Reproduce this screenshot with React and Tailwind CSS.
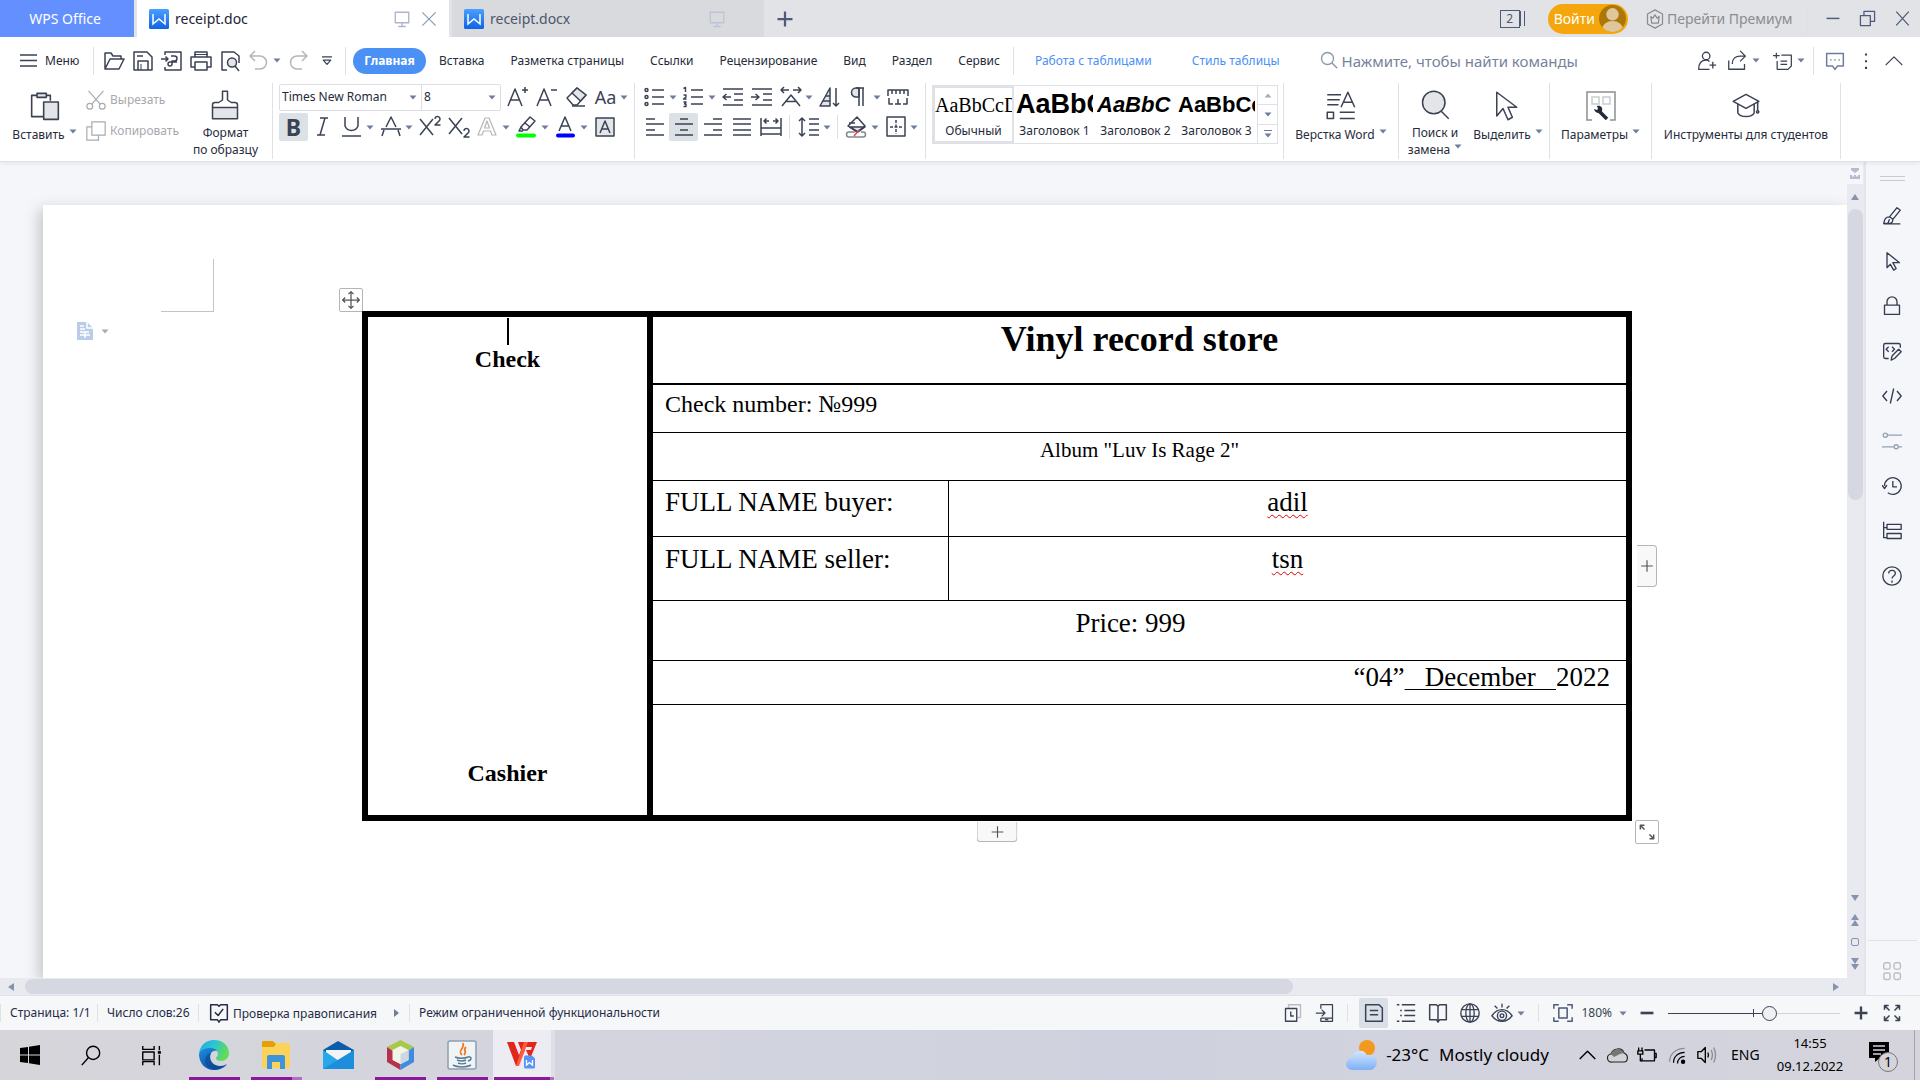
import React from "react";

const ui = "font-['Noto_Sans','Open_Sans',sans-serif]";
const serif = "font-['Liberation_Serif','Times_New_Roman',serif]";

function Svg({ size = 24, w = 1.5, className = "", children }) {
  return (
    <svg
      width={size}
      height={size}
      viewBox="0 0 24 24"
      fill="none"
      stroke="currentColor"
      strokeWidth={w}
      strokeLinejoin="round"
      className={"shrink-0 " + className}
      aria-hidden="true"
    >
      {children}
    </svg>
  );
}

const Caret = ({ className = "text-[#6f7d9c]" }) => (
  <svg width="8" height="5" viewBox="0 0 8 5" className={"shrink-0 " + className} aria-hidden="true">
    <path d="M0.5 0.5h7L4 4.5z" fill="currentColor" />
  </svg>
);

const Sep = ({ className = "h-9" }) => <div className={"w-px shrink-0 bg-[#dfe1e5] " + className} />;

/* ---------- icons ---------- */

const icons = {
  open: (
    <Svg>
      <path d="M3 20V4h6l2 3h8v3M3 20h14l5-10H8L3 20z" />
    </Svg>
  ),
  save: (
    <Svg>
      <path d="M3 3h13l5 5v13H3z M7 21v-9h10v9" />
      <path d="M6 7h6" />
      <path d="M10 15v6" strokeWidth="1" />
    </Svg>
  ),
  pdf: (
    <Svg>
      <path d="M5 6V3h16v18H5v-3" />
      <path d="M1 10h7M5.500 7.500 8 10l-2.500 2.500" />
      <path d="M11 7h3.500a2.500 2.500 0 0 1 0 5H12v3a2 2 0 1 1-2-2h7" />
    </Svg>
  ),
  print: (
    <Svg>
      <path d="M6 8V3h12v5M6 18H2V8h20v10h-4" />
      <path d="M6 13h12v8H6z" />
      <path d="M5 5.500h14" strokeWidth="1" />
    </Svg>
  ),
  preview: (
    <Svg>
      <path d="M9 21H4V3h12l5 4v7" />
      <circle cx="14" cy="13.500" r="4.500" fill="#e3e5e8" />
      <path d="m17 17 4 5" />
    </Svg>
  ),
  undo: (
    <Svg>
      <path d="M8 2 3 7l5 5M3 7h10a6.500 6.500 0 0 1 0 13H8" />
    </Svg>
  ),
  redo: (
    <Svg>
      <path d="m16 2 5 5-5 5M21 7H11a6.500 6.500 0 0 0 0 13h5" />
    </Svg>
  ),
  more: (
    <Svg size={20}>
      <path d="M6 7h12M7.500 11h9L12 16z" />
    </Svg>
  ),
  growFont: (
    <Svg>
      <path d="M1 21 8 4l7 17M3.500 15h9M15 5h6M18 2v6" />
    </Svg>
  ),
  shrinkFont: (
    <Svg>
      <path d="M1 21 8 4l7 17M3.500 15h9M15 5h6" />
    </Svg>
  ),
  eraser: (
    <Svg>
      <path d="M12 3 2 13l6 7h4l9-10z" />
      <path d="m7 8 8.500 8L21 10l-9-7z" fill="#e3e5e8" />
      <path d="M7 21h13" />
    </Svg>
  ),
  italic: (
    <Svg>
      <path d="M9 3h8M6 20h8M14 3 9 20" />
    </Svg>
  ),
  underline: (
    <Svg>
      <path d="M5 2v9a7 7 0 0 0 13 0V2M2 21h19" />
    </Svg>
  ),
  strike: (
    <Svg>
      <path d="M7 12 12 2l5 10M5 15l-2 6M19 15l2 6M2 14h20" />
    </Svg>
  ),
  superscript: (
    <Svg>
      <path d="m2 4 13 16M15 4 2 20" />
      <path d="M17 4a2.500 2.500 0 1 1 4.500 1.500L17 10h5.500" />
    </Svg>
  ),
  subscript: (
    <Svg>
      <path d="m2 3 13 16M15 3 2 19" />
      <path d="M17 16a2.500 2.500 0 1 1 4.500 1.500L17 22h5.500" />
    </Svg>
  ),
  textEffect: (
    <Svg w={1.2}>
      <path d="m2 20 7-17h4l7 17h-4l-1.500-4h-7L6 20zM8.500 13h5L11 6z" />
    </Svg>
  ),
  highlight: (
    <Svg>
      <path d="m6 12 9-10 5 4-8 9H8z" />
      <path d="m6 12-2 4h4M10 8l5 4" />
      <path d="M3 20.500h16" stroke="#00ff00" strokeWidth="4" strokeLinecap="round" />
    </Svg>
  ),
  fontColor: (
    <Svg>
      <path d="m5 16 6-14 6 14M7 11h8" />
      <path d="M4 20.500h15" stroke="#0000ff" strokeWidth="4" strokeLinecap="round" />
    </Svg>
  ),
  charShade: (
    <Svg>
      <path d="M3 3h18v18H3z" fill="#e3e5e8" />
      <path d="m7 18 5-12 5 12M9 14h6" />
    </Svg>
  ),
  bullets: (
    <Svg>
      <circle cx="3.500" cy="5" r="1.500" />
      <circle cx="3.500" cy="12" r="1.500" />
      <circle cx="3.500" cy="19" r="1.500" />
      <path d="M9 5h12M9 12h12M9 19h12" />
    </Svg>
  ),
  numbers: (
    <Svg>
      <path d="M9 5h12M9 12h12M9 19h12" />
      <path d="M1.500 3.500 3.500 2.500V7M1.500 10H4v2L1.500 14H4.500M1.500 17H4l-1.500 2H4v2.500H1.500" strokeWidth="1.400" />
    </Svg>
  ),
  outdent: (
    <Svg>
      <path d="M2 4h20M13 9h9M13 15h9M2 20h20M2 12h8M5.500 9 2 12l3.500 3" />
    </Svg>
  ),
  indent: (
    <Svg>
      <path d="M2 4h20M13 9h9M13 15h9M2 20h20M1 12h8M5.500 9 9 12l-3.500 3" />
    </Svg>
  ),
  charScale: (
    <Svg>
      <path d="m3 21 9-11 9 11M7.500 16.500h9" />
      <path d="M2 5h8M5 2 2 5l3 3M14 5h8M19 2l3 3-3 3" />
    </Svg>
  ),
  sort: (
    <Svg>
      <path d="M2 21 12 3v18z" fill="#e3e5e8" />
      <path d="M7.500 11H12M5 16h7" />
      <path d="M18 3v18M15 18l3 3 3-3" />
    </Svg>
  ),
  pilcrow: (
    <Svg>
      <path d="M12 12H9a4.500 4.500 0 0 1 0-9h3z" fill="#e3e5e8" />
      <path d="M12 21V3M16 21V3M9 3h8" />
    </Svg>
  ),
  ruler: (
    <Svg>
      <path d="M2 11V5h20v6M6 5v4M10 5v4M14 5v4M18 5v4" />
      <path d="M3 13v6h4M9 19h6M12 14v5M21 13v6h-4" />
    </Svg>
  ),
  left: (
    <Svg>
      <path d="M3 4h9M3 9h18M3 15h9M3 20h18" />
    </Svg>
  ),
  center: (
    <Svg>
      <path d="M8 4h8M3 9h18M8 15h8M3 20h18" />
    </Svg>
  ),
  right: (
    <Svg>
      <path d="M12 4h9M3 9h18M12 15h9M3 20h18" />
    </Svg>
  ),
  justify: (
    <Svg>
      <path d="M3 4h18M3 9h18M3 15h18M3 20h18" />
    </Svg>
  ),
  distribute: (
    <Svg>
      <path d="M2 3v18M22 3v18M5 6h5M14 6h5M7.500 3.500 5 6l2.500 2.500M16.500 3.500 19 6l-2.500 2.500M2 13h20M2 19h20" />
    </Svg>
  ),
  lineSpacing: (
    <Svg>
      <path d="M5 3v18M2 6l3-3 3 3M2 18l3 3 3-3M12 4h10M12 9h10M12 15h10M12 20h10" />
    </Svg>
  ),
  shading: (
    <Svg>
      <path d="M5 12h15l-7 5z" fill="#e3e5e8" />
      <path d="m12 2 8 9-8 6-9-6zM4 8h6" />
      <path d="M10 17H4a2.500 2.500 0 0 0 0 5h14a2.500 2.500 0 0 0 0-5h-2" stroke="#85888f" />
      <path d="m9 21 5-6" stroke="#e5484d" />
    </Svg>
  ),
  borders: (
    <Svg>
      <path d="M3 2h18v19H3z" />
      <path d="M12 5v14M6 12h12" strokeDasharray="3 1.500" />
    </Svg>
  ),
};

/* ---------- ribbon pieces ---------- */

function Tool({ name, caret, active, muted, label, children }) {
  return (
    <button
      type="button"
      aria-label={label || name}
      className={"flex h-7 shrink-0 items-center " + (muted ? "text-[#b4b6ba]" : "text-[#3a4254]")}
    >
      <span
        className={
          "flex h-7 w-[29px] items-center justify-center rounded-xs " + (active ? "bg-[#dce1e6]" : "")
        }
      >
        {children || icons[name]}
      </span>
      {caret && (
        <span className="w-[10px]">
          <Caret />
        </span>
      )}
    </button>
  );
}

function BigTool({ icon, lines, caret, className = "" }) {
  return (
    <button type="button" className={"flex flex-col items-center pt-[2px] text-[#262b3a] " + className}>
      <span className={"flex items-center " + (lines.length > 1 ? "h-[39px]" : "h-[41px]")}>{icon}</span>
      {lines.map((line, i) => (
        <span key={line} className="flex gap-1 text-xs leading-[17px] whitespace-nowrap">
          {line}
          {caret && i === lines.length - 1 && (
            <span className="pt-[3px]">
              <Caret />
            </span>
          )}
        </span>
      ))}
    </button>
  );
}

function StyleCell({ sample, label, sampleClass, active }) {
  return (
    <button
      type="button"
      className={
        "flex w-[81px] flex-col border-2 text-center " + (active ? "border-[#dfe1e6]" : "border-transparent")
      }
    >
      <span className={"flex h-[33px] w-full items-center overflow-hidden whitespace-nowrap text-black " + sampleClass}>
        {sample}
      </span>
      <span className="w-full text-xs leading-[20px] whitespace-nowrap text-[#262b3a]">{label}</span>
    </button>
  );
}

function DocIcon() {
  return (
    <svg width="20" height="20" viewBox="0 0 20 20" className="shrink-0" aria-hidden="true">
      <defs>
        <linearGradient id="doc" x1="0" y1="0" x2="0" y2="1">
          <stop offset="0" stopColor="#4aa0ff" />
          <stop offset="1" stopColor="#1062e6" />
        </linearGradient>
      </defs>
      <rect width="20" height="20" rx="1.500" fill="url(#doc)" />
      <path d="M4 5v10l6-5 6 5V5" fill="none" stroke="#fff" strokeWidth="1.500" />
    </svg>
  );
}

const Monitor = ({ className }) => (
  <Svg size={18} className={className} w={1.8}>
    <path d="M3 3h18v14H3zM12 17v5M7 22h10" />
  </Svg>
);

function TitleBar() {
  return (
    <header className="flex h-[37px] items-stretch bg-[#e2e3e7]">
      <button type="button" className="w-[134px] bg-[#638fff] pr-1 text-sm text-white">
        WPS Office
      </button>
      <div className="ml-[3px] flex w-[312px] items-center bg-white pl-3 text-sm text-[#1d2433]">
        <DocIcon />
        <span className="ml-1.5 flex-1">receipt.doc</span>
        <Monitor className="text-[#adb6cb]" />
        <button type="button" aria-label="Закрыть" className="mr-3 ml-[10px] text-[#8d99b5]">
          <Svg size={16} w={1.8}>
            <path d="m2 2 20 20M22 2 2 22" />
          </Svg>
        </button>
      </div>
      <div className="ml-[3px] flex w-[312px] items-center bg-[#d9dade] pl-3 text-sm text-[#4c566c]">
        <DocIcon />
        <span className="ml-1.5 flex-1">receipt.docx</span>
        <Monitor className="mr-[38px] text-[#bcc4d4]" />
      </div>
      <button type="button" aria-label="Новая вкладка" className="ml-3 text-[#4d5a78]">
        <Svg size={18} w={3}>
          <path d="M12 2v20M2 12h20" />
        </Svg>
      </button>
      <div className="ml-auto flex items-center">
        <button type="button" className="mr-3 flex items-center text-[#4d5a78]">
          <span className="flex h-[18px] w-5 items-center justify-center border border-current text-xs">2</span>
          <span className="h-[15px] w-[5px] border-r border-l border-current" />
        </button>
        <Sep className="h-6 bg-[#cdced3]" />
        <button
          type="button"
          className="mx-[10px] flex h-[30px] items-center rounded-full bg-[#f5a60c] pr-0.5 pl-1.5 text-sm text-white"
        >
          Войти
          <svg width="27" height="27" viewBox="0 0 26 26" className="ml-1" aria-hidden="true">
            <clipPath id="avatar">
              <circle cx="13" cy="13" r="13" />
            </clipPath>
            <g clipPath="url(#avatar)">
              <rect width="26" height="26" fill="#ad7708" />
              <circle cx="13" cy="9" r="6" fill="#e0c79b" />
              <ellipse cx="13" cy="23" rx="10" ry="7.500" fill="#e0c79b" />
            </g>
          </svg>
        </button>
        <Sep className="h-6 bg-[#cdced3]" />
        <button
          type="button"
          className="ml-1.5 flex w-[158px] items-center gap-0.5 text-sm whitespace-nowrap text-[#8b8c90]"
        >
          <Svg size={20}>
            <path d="m12 1 9 5v12l-9 5-9-5V6z" />
            <path d="M7 9l2.500 2L12 7l2.500 4L17 9l-1 8H8z" />
          </Svg>
          Перейти Премиум
        </button>
        <Sep className="ml-1 h-7 bg-[#cdced3]" />
        <div className="flex w-[112px] items-center justify-between pr-[10px] pl-[18px] text-[#4d5a78]">
          <button type="button" aria-label="Свернуть">
            <Svg size={14} w={2.5}>
              <path d="M1 11h22" />
            </Svg>
          </button>
          <button type="button" aria-label="Развернуть">
            <Svg size={17} w={1.8}>
              <path d="M2 8h14v14H2zM7 8V2h15v14h-6" />
            </Svg>
          </button>
          <button type="button" aria-label="Выход">
            <Svg size={15} w={2}>
              <path d="m2 1 20 22M22 1 2 23" />
            </Svg>
          </button>
        </div>
      </div>
    </header>
  );
}

const tabs = ["Вставка", "Разметка страницы", "Ссылки", "Рецензирование", "Вид", "Раздел", "Сервис"];

function MenuBar() {
  return (
    <nav className="flex h-[46px] items-center bg-white pt-px text-xs text-[#262b3a]">
      <button type="button" className="flex w-[93px] items-center gap-2 pl-5">
        <svg width="17" height="14" viewBox="0 0 17 14" className="text-[#3a4254]" aria-hidden="true">
          <path d="M0 1h17M0 6.500h17M0 12h17" stroke="currentColor" strokeWidth="1.300" />
        </svg>
        Меню
      </button>
      <Sep className="mr-[5px] h-7" />
      {["open", "save", "pdf", "print", "preview"].map((n) => (
        <Tool key={n} name={n} />
      ))}
      <Tool name="undo" muted caret />
      <Tool name="redo" muted />
      <Tool name="more" />
      <Sep className="mr-[7px] ml-1 h-7" />
      <button
        type="button"
        className="h-[26px] w-[73px] shrink-0 rounded-full bg-[#4a90f5] text-xs font-bold text-white"
      >
        Главная
      </button>
      {tabs.map((t) => (
        <button type="button" key={t} className="h-7 shrink-0 px-[13px] whitespace-nowrap">
          {t}
        </button>
      ))}
      <Sep className="h-7" />
      <button type="button" className="shrink-0 pl-[21px] whitespace-nowrap text-[#4a90f5]">
        Работа с таблицами
      </button>
      <button type="button" className="shrink-0 pl-10 whitespace-nowrap text-[#4a90f5]">
        Стиль таблицы
      </button>
      <label className="ml-10 flex min-w-0 flex-1 items-center gap-1 text-[#8a97b2]">
        <Svg size={18} w={1.8}>
          <circle cx="10" cy="10" r="8" />
          <path d="m16 16 7 7" />
        </Svg>
        <input
          type="text"
          aria-label="Поиск команд"
          placeholder="Нажмите, чтобы найти команды"
          className="w-full text-[15px] outline-none placeholder:text-[#77839b]"
        />
      </label>
      <div className="flex shrink-0 items-center gap-0.5 text-[#3a4254]">
        <Tool label="Участники">
          <Svg size={20} w={1.6}>
            <circle cx="11" cy="6" r="4.500" />
            <path d="M15 22H2c0-7 3-11 9-11 2 0 3 .5 4 1.500M19 13v8M15 17h8" />
          </Svg>
        </Tool>
        <Tool label="Поделиться" caret>
          <Svg size={21}>
            <path d="M2 12v10h18v-6" />
            <path d="M6 16c0-6 4-9 9-9h5M15 1l6 6-6 6" />
          </Svg>
        </Tool>
        <div className="w-0.5" />
        <Tool label="Заметки" caret>
          <Svg size={20}>
            <path d="M10 5h12v13l-4 4H5V12M9 12h8M9 16h8M4 2v7M0 5.500h8" />
          </Svg>
        </Tool>
        <Sep className="mx-1 h-7" />
        <Tool label="Комментарии">
          <Svg size={20} className="text-[#6f7d9c]" w={1.8}>
            <path d="M2 3h20v15h-7l-3 4-3-4H2zM7 10v1.500M12 10v1.500M17 10v1.500" />
          </Svg>
        </Tool>
        <Tool label="Ещё">
          <Svg size={20} w={2.5}>
            <path d="M12 3v2.500M12 11v2.500M12 19v2.500" />
          </Svg>
        </Tool>
        <button type="button" aria-label="Свернуть ленту" className="mr-4 ml-0.5">
          <Svg size={20} w={1.5}>
            <path d="m2 17 10-10 10 10" />
          </Svg>
        </button>
      </div>
    </nav>
  );
}

function Ribbon() {
  return (
    <section className="relative z-10 flex h-[79px] items-stretch border-b border-[#dfe1e5] bg-white shadow-[0_2px_4px_rgba(0,0,0,0.06)]">
      <div className="flex w-[272px]">
        <BigTool
          className="w-[86px] pl-[3px]"
          caret
          lines={["Вставить"]}
          icon={
            <Svg size={32} w={1.2} className="text-[#3a4254]">
              <path d="M8 4H2v16h9M16 8V4h-5" />
              <path d="M6 2.500h7v3H6z" fill="#e3e5e8" />
              <path d="M11 9h11v13H11z" fill="#e3e5e8" />
            </Svg>
          }
        />
        <div className="flex flex-col gap-[3px] pt-[3px] text-xs text-[#a7a9ad]">
          <button type="button" className="flex h-7 items-center gap-1">
            <Svg size={20} w={1.4}>
              <path d="M3 1 17 17M21 1 7 17" />
              <circle cx="4.500" cy="19.500" r="3.500" />
              <circle cx="19.500" cy="19.500" r="3.500" />
            </Svg>
            Вырезать
          </button>
          <button type="button" className="flex h-7 items-center gap-1">
            <Svg size={20} w={1.4}>
              <path d="M7 1h16v16H7z M7 7H1v16h14v-6" />
            </Svg>
            Копировать
          </button>
        </div>
        <BigTool
          className="ml-2 w-[77px]"
          lines={["Формат", "по образцу"]}
          icon={
            <Svg size={30} w={1.2} className="text-[#3a4254]">
              <path d="M2 14h20v9H2z" fill="#e3e5e8" />
              <path d="M2 14v-2a2 2 0 0 1 2-2h3l3-2V1h4v7l3 2h3a2 2 0 0 1 2 2v2" />
            </Svg>
          }
        />
      </div>
      <Sep className="h-[76px]" />
      <div className="w-[361px] pl-[6px]">
        <div className="flex items-center">
          <div className="flex h-[27px] w-[222px] shrink-0 items-center rounded-xs border border-[#dcdee3] text-xs text-[#262b3a]">
            <label className="flex h-full flex-1 items-center border-r border-[#dcdee3] pr-1">
              <select aria-label="Шрифт" className="w-full appearance-none pl-0.5 outline-none">
                <option>Times New Roman</option>
              </select>
              <Caret />
            </label>
            <label className="flex h-full w-[78px] items-center pr-1">
              <select aria-label="Размер шрифта" className="w-full appearance-none pl-0.5 outline-none">
                <option>8</option>
              </select>
              <Caret />
            </label>
          </div>
          <div className="flex pl-[3px]">
            <Tool name="growFont" />
            <Tool name="shrinkFont" />
            <Tool name="eraser" />
            <Tool label="Регистр" caret>
              <span className="text-lg">Aa</span>
            </Tool>
          </div>
        </div>
        <div className="mt-0.5 flex">
          <Tool label="Полужирный" active>
            <span className="text-[23px] font-bold">B</span>
          </Tool>
          <Tool name="italic" />
          <Tool name="underline" caret />
          <Tool name="strike" caret />
          <Tool name="superscript" />
          <Tool name="subscript" />
          <Tool name="textEffect" muted caret />
          <Tool name="highlight" caret />
          <Tool name="fontColor" caret />
          <Tool name="charShade" />
        </div>
      </div>
      <Sep className="h-[76px]" />
      <div className="w-[290px] pl-[5px]">
        <div className="flex">
          <Tool name="bullets" caret />
          <Tool name="numbers" caret />
          <Tool name="outdent" />
          <Tool name="indent" />
          <Tool name="charScale" caret />
          <Tool name="sort" />
          <Tool name="pilcrow" caret />
          <Tool name="ruler" />
        </div>
        <div className="mt-0.5 flex items-center">
          <Tool name="left" />
          <Tool name="center" active />
          <Tool name="right" />
          <Tool name="justify" />
          <Tool name="distribute" />
          <Sep className="mx-1 h-6" />
          <Tool name="lineSpacing" caret />
          <Sep className="mx-1 h-6" />
          <Tool name="shading" caret />
          <Tool name="borders" caret />
        </div>
      </div>
      <Sep className="h-[76px]" />
      <div className="mt-[2px] mr-[5px] ml-[6px] flex h-[59px] w-[346px] border border-[#dfe1e6]">
        <StyleCell active sample="AaBbCcDd" label="Обычный" sampleClass="font-['Liberation_Serif',serif] text-xl" />
        <StyleCell
          sample="AaBbCc"
          label="Заголовок 1"
          sampleClass="font-['Liberation_Sans',sans-serif] text-[27px] font-bold"
        />
        <StyleCell
          sample="AaBbC"
          label="Заголовок 2"
          sampleClass="font-['Liberation_Sans',sans-serif] text-[22px] font-bold italic"
        />
        <StyleCell
          sample="AaBbCc"
          label="Заголовок 3"
          sampleClass="font-['Liberation_Sans',sans-serif] text-[22px] font-bold"
        />
        <div className="flex flex-1 flex-col divide-y divide-[#dfe1e6] border-l border-[#dfe1e6]">
          <button type="button" aria-label="Вверх" className="flex flex-1 items-center justify-center">
            <Caret className="rotate-180 text-[#a3adc2]" />
          </button>
          <button type="button" aria-label="Вниз" className="flex flex-1 items-center justify-center">
            <Caret />
          </button>
          <button type="button" aria-label="Все стили" className="flex flex-1 flex-col items-center justify-center gap-0.5">
            <span className="h-px w-2 bg-[#6f7d9c]" />
            <Caret />
          </button>
        </div>
      </div>
      <Sep className="h-[76px]" />
      <BigTool
        className="w-[114px]"
        caret
        lines={["Верстка Word"]}
        icon={
          <Svg size={30} w={1.2} className="text-[#3a4254]">
            <path d="M1 3h11M1 7h10M1 11h9M12 13 17.500 1 23 13M14 9h7" />
            <path d="M1 17h5v5H1zM11 17h12M11 22h12" />
          </Svg>
        }
      />
      <Sep className="h-[76px]" />
      <div className="flex w-[150px] gap-2 pl-[6px]">
        <BigTool
          className="w-[60px]"
          caret
          lines={["Поиск и", "замена"]}
          icon={
            <Svg size={30} w={1.2} className="text-[#3a4254]">
              <circle cx="11" cy="10" r="9" fill="#e3e5e8" />
              <path d="m17 17 6 6" />
            </Svg>
          }
        />
        <BigTool
          className="w-[70px]"
          caret
          lines={["Выделить"]}
          icon={
            <Svg size={30} w={1.2} className="text-[#3a4254]">
              <path d="M3 1v19l5-6 4 9 3.500-2-3.500-8h7z" />
            </Svg>
          }
        />
      </div>
      <Sep className="h-[76px]" />
      <BigTool
        className="w-[101px]"
        caret
        lines={["Параметры"]}
        icon={
          <svg width="30" height="30" viewBox="0 0 30 30" fill="none" aria-hidden="true">
            <path d="M6 29H1V1h28v28h-5" stroke="#8d8f94" strokeWidth="1.500" />
            <path d="M6 6h7v7H6zM17 6h7v7h-7z" stroke="#c9cbd0" strokeWidth="1.500" />
            <path d="m13 20 8 8" stroke="#232b3b" strokeWidth="3.500" />
            <path d="M8 18l3 1 1-1-1-3c4-1 6 2 5 5-1 3-7 3-8-2z" fill="#232b3b" />
          </svg>
        }
      />
      <Sep className="h-[76px]" />
      <BigTool
        className="w-[188px]"
        lines={["Инструменты для студентов"]}
        icon={
          <Svg size={28} w={1.3} className="text-[#3a4254]">
            <path d="m12 2 11 6-11 6L1 8z" />
            <path d="M5 10v8c2 4 12 4 14 0v-8M22 8v8" />
            <circle cx="22" cy="17" r="1" />
          </Svg>
        }
      />
      <Sep className="h-[76px]" />
    </section>
  );
}

/* ---------- document ---------- */

function Receipt() {
  const line = "border-b border-black align-top ";
  return (
    <table
      className={"w-full table-fixed border-separate border-spacing-0 border-[6px] border-black text-black " + serif}
    >
      <colgroup>
        <col className="w-[285px]" />
        <col className="w-[296px]" />
        <col />
      </colgroup>
      <tbody>
        <tr className="h-[68px]">
          <td rowSpan={8} className="h-px border-r-[6px] border-black p-0 text-center align-top text-2xl leading-7 font-bold">
            <div className="flex h-full min-h-[498px] flex-col justify-between">
              <div>
                <div className="flex h-7 items-end justify-center">
                  <span className="h-[27px] w-0.5 bg-black" />
                </div>
                Check
              </div>
              <div className="pb-7">Cashier</div>
            </div>
          </td>
          <td colSpan={2} className="border-b-2 border-black pt-0.5 text-center align-top text-4xl leading-10 font-bold">
            Vinyl record store
          </td>
        </tr>
        <tr className="h-12">
          <td colSpan={2} className={line + "px-3 pt-[5px] text-2xl leading-7"}>
            Check number: №999
          </td>
        </tr>
        <tr className="h-12">
          <td colSpan={2} className={line + "pt-[5px] text-center text-[21px] leading-6"}>
            Album "Luv Is Rage 2"
          </td>
        </tr>
        <tr className="h-14">
          <td className={line + "border-r px-3 pt-[5px] text-[27px] leading-8"}>FULL NAME buyer:</td>
          <td className={line + "pt-[5px] text-center text-[27px] leading-8"}>
            <span className="underline decoration-[#e00000] decoration-wavy decoration-1 underline-offset-3">adil</span>
          </td>
        </tr>
        <tr className="h-16">
          <td className={line + "border-r px-3 pt-[6px] text-[27px] leading-8"}>FULL NAME seller:</td>
          <td className={line + "pt-[6px] text-center text-[27px] leading-8"}>
            <span className="underline decoration-[#e00000] decoration-wavy decoration-1 underline-offset-3">tsn</span>
          </td>
        </tr>
        <tr className="h-[60px]">
          <td colSpan={2} className={line + "pt-[6px] pr-[18px] text-center text-[27px] leading-8"}>
            Price: 999
          </td>
        </tr>
        <tr className="h-11">
          <td colSpan={2} className={line + "pr-4 text-right text-[27px] leading-8 whitespace-pre"}>
            “04”<span className="underline decoration-1 underline-offset-3">{"   December   "}</span>2022
          </td>
        </tr>
        <tr className="h-[110px]">
          <td colSpan={2} />
        </tr>
      </tbody>
    </table>
  );
}

function Page() {
  const handle = "absolute flex items-center justify-center border border-[#b5b5b5] bg-[#f8f8f8] text-[#555] ";
  return (
    <div className="flex min-h-0 min-w-0 flex-1 overflow-hidden bg-[#f5f6f9] pt-[43px] pl-[43px]">
      <article className="flex flex-1 items-start bg-white pr-[215px] shadow-[-4px_4px_14px_rgba(0,0,0,0.2)]">
        <div className="w-[319px] shrink-0 pt-[54px]">
          <div className="ml-[118px] h-[53px] w-[53px] border-r border-b border-[#c4c4c4]" />
          <button
            type="button"
            aria-label="Параметры раздела"
            className="mt-[10px] ml-[34px] flex items-center gap-2"
          >
            <svg width="16" height="18" viewBox="0 0 16 18" aria-hidden="true">
              <path d="M0 0h10l6 6v12H0z" fill="#b9cdea" />
              <path d="M10 0v6h6M3 4h4M3 7h5M3 10h9M3 13h10M8 10v6" stroke="#fff" fill="none" strokeWidth="1.500" />
            </svg>
            <Caret className="text-[#ababab]" />
          </button>
        </div>
        <div className="relative mt-[106px] min-w-0 flex-1">
          <Receipt />
          <button
            type="button"
            aria-label="Переместить таблицу"
            className={handle + "-top-[23px] -left-[23px] h-6 w-6 rounded-xs bg-white"}
          >
            <Svg size={20} w={1.5}>
              <path d="M12 2v20M2 12h20M9 5l3-3 3 3M9 19l3 3 3-3M5 9l-3 3 3 3M19 9l3 3-3 3" />
            </Svg>
          </button>
          <button
            type="button"
            aria-label="Добавить столбец"
            className={handle + "top-1/2 -right-[25px] h-[42px] w-5 -translate-y-1/2 rounded-r border-l-0"}
          >
            <Svg size={14} w={2}>
              <path d="M12 2v20M2 12h20" />
            </Svg>
          </button>
          <button
            type="button"
            aria-label="Добавить строку"
            className={handle + "-bottom-[21px] left-1/2 h-5 w-[41px] -translate-x-1/2 rounded-b border-t-0"}
          >
            <Svg size={14} w={2}>
              <path d="M12 2v20M2 12h20" />
            </Svg>
          </button>
          <button
            type="button"
            aria-label="Изменить размер"
            className={handle + "-right-[27px] -bottom-[23px] h-6 w-6 rounded-xs bg-white"}
          >
            <Svg size={20} w={1.8}>
              <path d="m4 4 5 5M4 9V4h5M15 15l5 5M20 15v5h-5" />
            </Svg>
          </button>
        </div>
      </article>
    </div>
  );
}

function Triangle({ className = "" }) {
  return (
    <svg width="8" height="6" viewBox="0 0 8 6" className={"shrink-0 text-[#8592b0] " + className} aria-hidden="true">
      <path d="M0 6 4 0l4 6z" fill="currentColor" />
    </svg>
  );
}

function VScroll() {
  return (
    <div className="flex w-[17px] flex-col items-center bg-[#e9eaf0] pr-px">
      <button
        type="button"
        aria-label="Линейка"
        className="flex h-[22px] w-full items-center justify-center bg-[#f5f6f9] text-[#b4bdd0]"
      >
        <svg width="10" height="11" viewBox="0 0 10 11" aria-hidden="true">
          <path d="M1 0h8v2L5 5 1 2zM0 7h2v1.500h2V7h2v1.500h2V7h2v4H0z" fill="currentColor" />
        </svg>
      </button>
      <button type="button" aria-label="Прокрутить вверх" className="flex h-[25px] items-center">
        <Triangle />
      </button>
      <div className="h-[291px] w-[15px] rounded-full bg-[#d5d8e0]" />
      <div className="flex-1" />
      <button type="button" aria-label="Прокрутить вниз" className="flex h-[22px] items-center">
        <Triangle className="rotate-180" />
      </button>
      <button
        type="button"
        aria-label="Предыдущая страница"
        className="flex h-[22px] flex-col items-center justify-center"
      >
        <Triangle />
        <Triangle />
      </button>
      <button type="button" aria-label="Объект перехода" className="flex h-[22px] items-center">
        <span className="h-2 w-2 rounded-xs border border-[#8592b0]" />
      </button>
      <button
        type="button"
        aria-label="Следующая страница"
        className="mb-[3px] flex h-[22px] flex-col items-center justify-center"
      >
        <Triangle className="rotate-180" />
        <Triangle className="rotate-180" />
      </button>
    </div>
  );
}

const side = [
  ["Стили", <path key="a" d="m9 13 9-11 4 3-9 11zM9 13c-5 0-6 3-7 8h7c3 0 4-2 4-5zM2 21.500h20M7 21l2-5" />],
  ["Выделение", <path key="a" d="M6 2v18l4-4 4 7 3-2-4-7h8z" />],
  ["Защита", <path key="a" d="M3 11h18v11H3zM6 11V7a6 6 0 0 1 12 0v4" />],
  ["Правка кода", <path key="a" d="M22 8V5a2 2 0 0 0-2-2H4a2 2 0 0 0-2 2v14a2 2 0 0 0 2 2h4M8 7l-3 3 3 3M12 7l3 3-3 3M11 23l1-5 8-8 3 3-8 8z" />],
  ["Код", <path key="a" d="m6 6-5 6 5 6M18 6l5 6-5 6M14 3l-4 18" />],
  [
    "Настройки",
    <g key="a">
      <circle cx="4" cy="5" r="2.500" />
      <circle cx="17" cy="19" r="2.500" />
      <path d="M7 5h17M0 19h14M20 19h4" />
    </g>,
  ],
  ["История", <path key="a" d="M3 12A10 10 0 1 1 7 20M0 11l3 4 3-4M13 6v7h5" />],
  ["Структура", <path key="a" d="M2 1v19h4M2 8h4M6 4h17v6H6zM6 15h17v6H6z" />],
  [
    "Справка",
    <g key="a">
      <circle cx="12" cy="12" r="11" />
      <path d="M8 9c0-5 8-5 8 0 0 3-4 3-4 6M12 17.500V20" />
    </g>,
  ],
];

function SideBar() {
  return (
    <aside className="flex w-14 flex-col items-center border-l-2 border-[#e3e4ec] bg-[#f5f6f9] pr-[2px] text-[#333c50]">
      <div className="mt-[14px] h-[5px] w-[25px] border-y border-[#c8cad0]" />
      <div className="flex flex-1 flex-col pt-3">
        {side.map(([label, shape]) => (
          <button
            type="button"
            key={label}
            aria-label={label}
            className={"flex h-[45px] items-center " + (label === "Настройки" ? "text-[#96a0b4]" : "")}
          >
            <Svg size={20} w={1.6}>
              {shape}
            </Svg>
          </button>
        ))}
      </div>
      <button
        type="button"
        aria-label="Панели"
        className="flex h-[55px] w-[49px] justify-center border-t border-[#dfe1e6] pt-[21px] text-[#bdbec2]"
      >
        <Svg size={19} w={1.8}>
          <rect x="1" y="1" width="8" height="8" rx="2" />
          <rect x="14" y="1" width="8" height="8" rx="2" />
          <rect x="1" y="14" width="8" height="8" rx="2" />
          <rect x="14" y="14" width="8" height="8" rx="2" />
        </Svg>
      </button>
    </aside>
  );
}

function StatusBar() {
  return (
    <footer className="flex h-[35px] shrink-0 items-center border-t border-[#e2e3e8] bg-[#f5f7f9] text-xs whitespace-nowrap text-[#262b45]">
      <Sep className="h-[18px]" />
      <span className="w-[96px] pl-[9px]">Страница: 1/1</span>
      <Sep className="h-[18px]" />
      <span className="w-[100px] pl-[9px]">Число слов:26</span>
      <Sep className="h-[18px]" />
      <button type="button" className="flex w-[210px] items-center gap-1 pl-[10px]">
        <Svg size={20} w={1.8}>
          <path d="M2 2h8l2 2 2-2h8v18h-8l-2 3-2-3H2zM7 11l4 4 6-8" />
        </Svg>
        <span className="pt-0.5">Проверка правописания</span>
        <svg width="5" height="8" viewBox="0 0 5 8" className="mr-[10px] ml-auto text-[#6f7d9c]" aria-hidden="true">
          <path d="M0 0 5 4 0 8z" fill="currentColor" />
        </svg>
      </button>
      <Sep className="h-[18px]" />
      <span className="flex-1 pl-[9px]">Режим ограниченной функциональности</span>
      <div className="flex shrink-0 items-center text-[#3a4254]">
        <button type="button" aria-label="История версий" className="flex w-8 justify-center">
          <Svg size={18} w={1.8}>
            <path d="M6 5V1h16v17h-4" stroke="#b9bcc2" />
            <path d="M2 6h15v17H2z" />
            <path d="M9 10v6h4" />
          </Svg>
        </button>
        <button type="button" aria-label="Отправить на телефон" className="flex w-8 justify-center">
          <Svg size={20}>
            <path d="M7 7V2h14v20H7v-4M1 12h11M8 8l4 4-4 4M7 18h14M12 20h4" />
          </Svg>
        </button>
        <Sep className="mx-[6px] h-[18px]" />
        <button
          type="button"
          aria-label="Разметка страницы"
          className="mr-0.5 ml-[5px] flex h-[30px] w-[29px] items-center justify-center rounded-xs bg-[#d9dfe6]"
        >
          <Svg size={20} w={1.8}>
            <path d="M2 2h16l4 4v16H2zM7 9h10M7 14h10" />
          </Svg>
        </button>
        <button type="button" aria-label="Структура документа" className="flex w-8 justify-center">
          <Svg size={20} w={1.8}>
            <path d="M1 2h3M7 2h16M5 9h2M10 9h13M5 15h2M10 15h13M1 22h3M7 22h16" />
          </Svg>
        </button>
        <button type="button" aria-label="Режим чтения" className="flex w-8 justify-center">
          <Svg size={20} w={1.8}>
            <path d="M2 2h8l2 2 2-2h8v18h-8l-2 3-2-3H2zM12 4v18" />
          </Svg>
        </button>
        <button type="button" aria-label="Веб-документ" className="flex w-8 justify-center">
          <Svg size={20} w={1.6}>
            <circle cx="12" cy="12" r="11" />
            <ellipse cx="12" cy="12" rx="5" ry="11" />
            <path d="M12 1v22M2 8h20M2 16h20" />
          </Svg>
        </button>
        <button type="button" aria-label="Защита глаз" className="flex w-[44px] items-center justify-center gap-1">
          <Svg size={22} w={1.5}>
            <path d="M1 15c6-9 16-9 22 0-6 8-16 8-22 0z" />
            <circle cx="12" cy="15" r="5" />
            <circle cx="12" cy="15" r="2" />
            <path d="M12 2v4M4 4l3 3M20 4l-3 3" />
          </Svg>
          <Caret />
        </button>
        <Sep className="mr-[14px] ml-2 h-[18px]" />
        <Svg size={20} w={1.8} className="text-[#4d5a78]">
          <path d="M1 7V2h6M17 2h6v5M23 17v5h-6M7 22H1v-5M7 6h10v12H7z" />
        </Svg>
        <button type="button" className="ml-2 flex items-center gap-[7px] text-xs">
          180% <Caret />
        </button>
        <button type="button" aria-label="Уменьшить" className="ml-[13px] flex">
          <Svg size={14} w={4.5}>
            <path d="M1 12h22" />
          </Svg>
        </button>
        <div className="relative mx-[14px] flex w-[172px] items-center">
          <span className="absolute left-[85px] h-2 w-px bg-[#3a4254]" />
          <input
            type="range"
            aria-label="Масштаб"
            defaultValue={60}
            className="relative h-4 w-full appearance-none bg-[linear-gradient(#3a4254,#3a4254),linear-gradient(#cfd3da,#cfd3da)] bg-[length:58%_1px,100%_1px] bg-left bg-no-repeat [&::-webkit-slider-thumb]:h-[15px] [&::-webkit-slider-thumb]:w-[15px] [&::-webkit-slider-thumb]:appearance-none [&::-webkit-slider-thumb]:rounded-full [&::-webkit-slider-thumb]:border [&::-webkit-slider-thumb]:border-[#3a4254] [&::-webkit-slider-thumb]:bg-[#f0f0f2]"
          />
        </div>
        <button type="button" aria-label="Увеличить" className="flex">
          <Svg size={14} w={4}>
            <path d="M12 1v22M1 12h22" />
          </Svg>
        </button>
        <button type="button" aria-label="Во весь экран" className="mr-[18px] ml-[14px] flex">
          <Svg size={20} w={1.8}>
            <path d="M3 3l6 6M3 8V3h5M21 3l-6 6M16 3h5v5M3 21l6-6M3 16v5h5M21 21l-6-6M16 21h5v-5" />
          </Svg>
        </button>
      </div>
    </footer>
  );
}

/* ---------- taskbar ---------- */

const apps = [
  {
    name: "Edge",
    bar: "left-[6px] w-[51px]",
    icon: (
      <svg width="30" height="30" viewBox="0 0 30 30" aria-hidden="true">
        <defs>
          <linearGradient id="e1" x1="0" y1="0" x2="1" y2="0.4">
            <stop offset="0" stopColor="#22a7e6" />
            <stop offset="0.5" stopColor="#2cc4d2" />
            <stop offset="1" stopColor="#62dc58" />
          </linearGradient>
          <linearGradient id="e2" x1="0" y1="0" x2="0.7" y2="1">
            <stop offset="0" stopColor="#1b8ee0" />
            <stop offset="1" stopColor="#0c4a9c" />
          </linearGradient>
        </defs>
        <path d="M0 14C1 5 7 0 15 0c9 0 15 6 15 13 0 5-4 8-8 8-3 0-5-1-5-3 0-1 2-2 2-4 0-3-3-5-7-5C6 9 1 12 0 14z" fill="url(#e1)" />
        <path d="M0 14c1-3 5-6 11-6 3 0 6 1 7 3-4-1-7 2-7 6 0 5 5 9 10 9 3 0 5-1 7-2-3 4-8 6-13 6C6 30 0 23 0 14z" fill="url(#e2)" />
        <path d="M12 13c-3 8 3 14 9 14-4 3-14 2-15-6-.5-4 3-8 6-8z" fill="#0a3f8a" opacity=".5" />
      </svg>
    ),
  },
  {
    name: "Проводник",
    bar: "left-[6px] w-[41px]",
    extra: "left-[47px] w-[10px]",
    icon: (
      <svg width="28" height="28" viewBox="0 0 28 28" aria-hidden="true">
        <path d="M0 5h12l2-3h14v25H0z" fill="#fbd35a" />
        <path d="M0 1a1 1 0 0 1 1-1h10l3 3-2 3H0z" fill="#e3a008" />
        <path d="M5 28V16a2 2 0 0 1 2-2h14a2 2 0 0 1 2 2v12h-5v-7h-8v7z" fill="#3f93d8" />
      </svg>
    ),
  },
  {
    name: "Почта",
    icon: (
      <svg width="31" height="28" viewBox="0 0 31 28" aria-hidden="true">
        <path d="M0 9 15 0l16 9v4H0z" fill="#0b5cab" />
        <path d="M3 9h25v12H3z" fill="#f4f4f6" />
        <path d="M0 9v19h31V9L16 20z" fill="#27a8e8" />
        <path d="M0 28 31 9v19z" fill="#1d8edb" />
      </svg>
    ),
  },
  {
    name: "NetBeans",
    bar: "left-[6px] w-[51px]",
    icon: (
      <svg width="27" height="30" viewBox="0 0 27 30" aria-hidden="true">
        <path d="M13.500 0 27 7l-6 4-7.500-4L6 11 0 7z" fill="#a8c84a" />
        <path d="M0 7l6 4v9l7.500 4v6L0 22z" fill="#b5324e" />
        <path d="M27 7l-6 4v9l-7.500 4v6L27 22z" fill="#3f8be0" />
        <path d="m13.500 6 8 4v10l-8 4-8-4V10z" fill="#f2f4e8" />
        <path d="m13.500 14 8-4v10l-8 4z" fill="#cfd7de" />
      </svg>
    ),
  },
  {
    name: "Java",
    bar: "left-[6px] w-[51px]",
    icon: (
      <svg width="30" height="30" viewBox="0 0 30 30" fill="none" aria-hidden="true">
        <rect x="1" y="1" width="28" height="28" rx="2" fill="#f1f4f6" stroke="#8aa0b0" strokeWidth="1.500" />
        <path d="M15 15c-5-5 3-6 1-12M17 15c4-4-2-4 2-8" stroke="#ee7a24" strokeWidth="1.800" />
        <path d="M8 17c3 1.500 10 1.500 13 0M10 20c3 1 7 1 9 0M11 23c2 1 6 1 8 0M6 25c4 2.500 14 2.500 18 0M21 17c4-1 4 3 0 4" stroke="#547a96" strokeWidth="1.500" />
      </svg>
    ),
  },
  {
    name: "WPS Office",
    bar: "left-[1px] w-[56px]",
    extra: "left-[57px] w-[4px]",
    active: true,
    icon: (
      <svg width="30" height="27" viewBox="0 0 30 27" fill="none" aria-hidden="true">
        <path d="M0 0h7l5 13 2-5-3-8h19l-7 17-4-9h5l1-3h-8l1 3-7 16H9z" fill="#e3261b" />
        <path d="M17 0h4L12 24H9z" fill="#ff5a3c" />
        <path d="M17 15a1.500 1.500 0 0 1 1.500-1.500H25l3 3V25a1.500 1.500 0 0 1-1.500 1.500h-8A1.500 1.500 0 0 1 17 25z" fill="#5b93f5" />
        <path d="M19.500 18v5l3-2.500 3 2.500v-5" stroke="#fff" strokeWidth="1.300" />
      </svg>
    ),
  },
];

function TaskBar() {
  return (
    <footer className="flex h-[50px] shrink-0 items-stretch bg-[linear-gradient(90deg,#d6d5da,#d3d4de_30%,#cfd2de_60%,#d5d4dd)] text-black">
      <button type="button" aria-label="Пуск" className="flex w-[60px] items-center justify-center">
        <svg width="20" height="20" viewBox="0 0 20 20" aria-hidden="true">
          <path d="M0 3l8-1v7.500H0zM9 1.800 20 0v9.500H9zM0 10.500h8V18l-8-1zM9 10.500h11V20L9 18.200z" />
        </svg>
      </button>
      <button type="button" aria-label="Поиск" className="flex w-[60px] items-center justify-center">
        <Svg size={21} w={1.6}>
          <circle cx="15" cy="9" r="7.500" />
          <path d="M9.500 14.500 2 23" />
        </Svg>
      </button>
      <button type="button" aria-label="Представление задач" className="flex w-[63px] items-center justify-center">
        <Svg size={21} w={1.6}>
          <path d="M2 1v4h13V1M2 8h13v9H2zM2 23v-4h13v4M21 1v5M21 11v12" />
          <path d="M21 7v3" strokeWidth="3.500" />
        </Svg>
      </button>
      {apps.map((a) => (
        <button
          type="button"
          key={a.name}
          aria-label={a.name}
          className={
            "relative flex w-[62px] items-center justify-center " +
            (a.active ? "border-r-4 border-[#dfdfe6] bg-[#ececf2]" : "")
          }
        >
          {a.icon}
          {a.bar && <span className={"absolute bottom-0 h-[3px] bg-[#8a179c] " + a.bar} />}
          {a.extra && <span className={"absolute bottom-0 h-[3px] bg-[#b56cc0] " + a.extra} />}
        </button>
      ))}
      <div className="ml-auto flex shrink-0 items-center">
        <button type="button" className="flex items-center text-[17px] whitespace-nowrap">
          <svg width="31" height="32" viewBox="0 0 31 32" className="mr-[9px]" aria-hidden="true">
            <defs>
              <linearGradient id="cl" x1="0" y1="0" x2="0" y2="1">
                <stop offset="0" stopColor="#d4e6ff" />
                <stop offset="1" stopColor="#7fb0f5" />
              </linearGradient>
            </defs>
            <circle cx="21" cy="9" r="8" fill="#f39a1d" />
            <path d="M6 31a6 6 0 0 1 0-12 8 8 0 0 1 15-3 6 6 0 0 1 4 15z" fill="url(#cl)" />
          </svg>
          <span className="mr-[10px]">-23°C</span>
          <span>Mostly cloudy</span>
        </button>
        <div className="ml-[23px] flex items-center">
          <button type="button" aria-label="Скрытые значки" className="flex w-[30px] justify-center">
            <Svg size={17} w={2}>
              <path d="m1 17 11-11 11 11" />
            </Svg>
          </button>
          <button type="button" aria-label="OneDrive" className="flex w-[30px] justify-center">
            <svg width="21" height="15" viewBox="0 0 21 15" aria-hidden="true">
              <path d="M5 14a4 4 0 0 1-1-8c2-6 11-7 13-1 5 2 4 9 0 9z" fill="#d4d4d8" stroke="#222" strokeWidth="1.200" />
              <path d="M4 6c2-6 11-7 13-1l-4 1-6 3z" fill="#777" />
            </svg>
          </button>
          <button type="button" aria-label="Батарея" className="flex w-[30px] justify-center">
            <Svg size={20} w={1.6}>
              <path d="M9 6h12v13H6v-3M21 10h2v5h-2" />
              <path d="M2 3v4M6 3v4M1 7h6v4H1zM4 11v8h2" />
            </Svg>
          </button>
          <button type="button" aria-label="Сеть" className="flex w-[30px] justify-center">
            <Svg size={19} w={1.6}>
              <path d="M2 20C2 10 10 3 21 3" stroke="#8b8b90" />
              <path d="M7 21C7 13 13 8 21 8M12 22c0-5 4-9 9-9" />
              <circle cx="19" cy="20" r="2" fill="currentColor" />
            </Svg>
          </button>
          <button type="button" aria-label="Громкость" className="flex w-[30px] justify-center">
            <Svg size={20} w={1.6}>
              <path d="M1 8h4l5-5v18l-5-5H1zM13 9c1 2 1 4 0 6" />
              <path d="M17 6c2 4 2 8 0 12M20 3c3 6 3 12 0 18" stroke="#8b8b90" />
            </Svg>
          </button>
        </div>
        <button type="button" className="ml-[9px] w-11 text-left text-sm">
          ENG
        </button>
        <button type="button" className="w-[70px] text-center text-[13px] leading-[23px] whitespace-nowrap">
          14:55
          <br />
          09.12.2022
        </button>
        <button type="button" aria-label="Уведомления" className="relative mr-[25px] ml-6 flex h-[34px] w-5 pt-1">
          <svg width="20" height="20" viewBox="0 0 20 20" aria-hidden="true">
            <path d="M0 0h20v16H11l-5 4v-4H0z" />
            <path d="M4 4h12M4 8h12M4 12h8" stroke="#d4d4de" strokeWidth="1.500" />
          </svg>
          <span className="absolute top-[14px] left-[9px] flex h-5 w-5 items-center justify-center rounded-full border border-[#777] bg-[#d4d4da] text-sm">
            1
          </span>
        </button>
        <div className="mr-[5px] h-full w-px bg-[#a4a4ac]" />
      </div>
    </footer>
  );
}

export default function App() {
  return (
    <div className={"flex h-screen flex-col overflow-hidden bg-white " + ui}>
      <TitleBar />
      <MenuBar />
      <Ribbon />
      <main className="flex min-h-0 flex-1">
        <div className="flex min-w-0 flex-1 flex-col">
          <div className="flex min-h-0 flex-1">
            <Page />
            <VScroll />
          </div>
          <div className="flex h-[17px] items-center bg-[#e9eaf0]">
            <button type="button" aria-label="Прокрутить влево" className="flex w-[25px] pl-[7px]">
              <Triangle className="-rotate-90" />
            </button>
            <div className="h-[15px] w-[68%] rounded-full bg-[#d5d8e0]" />
            <button type="button" aria-label="Прокрутить вправо" className="mr-6 ml-auto flex">
              <Triangle className="rotate-90" />
            </button>
          </div>
        </div>
        <SideBar />
      </main>
      <StatusBar />
      <TaskBar />
    </div>
  );
}
